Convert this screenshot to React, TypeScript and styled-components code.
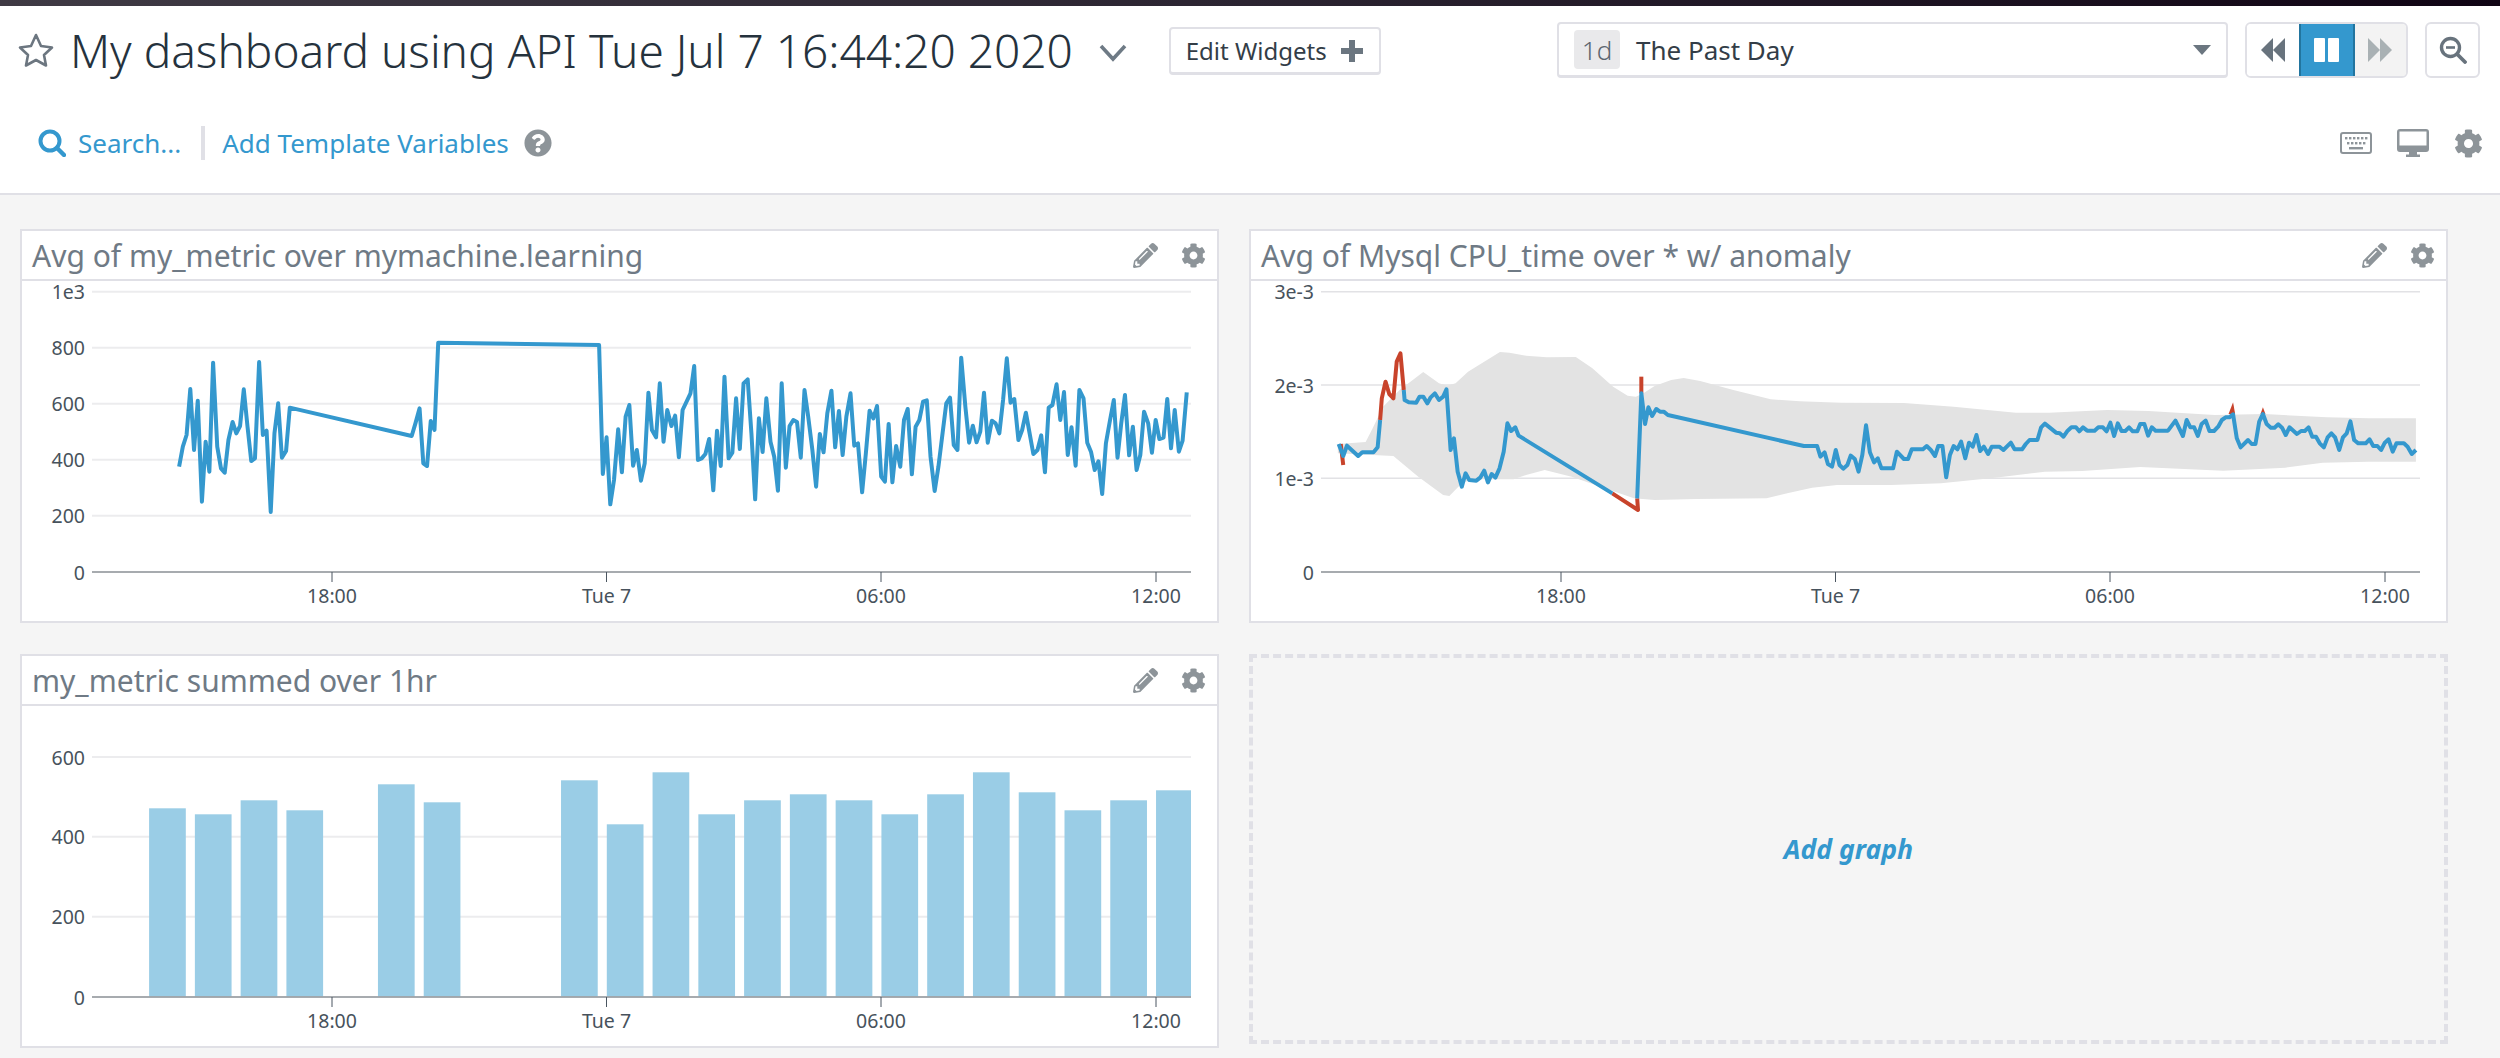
import React from "react";
import styled, { createGlobalStyle } from "styled-components";
import { FaCog, FaPencilAlt, FaQuestionCircle } from "react-icons/fa";

type Point = [number, number];

const BLUE = "#3498ce";
const RED = "#c8432b";

// samples traced off the graphs, x/y are scaled into the svg below
const trace = (points: number[][], dx: number): Point[] =>
  points.map(([x, y]) => [x / 2.412 + dx, y / 3 - 61]);
const toPath = (points: Point[]) => points.map((p) => p.join(",")).join(" ");

const metricSeries = [
  ...trace(
    [
      [432, 740], [441, 680], [450, 645], [459, 507], [468, 690], [477, 542], [487, 845], [496, 665], [505, 755],
      [514, 428], [524, 680], [533, 745], [542, 758], [551, 660], [561, 606], [570, 640], [579, 618], [588, 508],
      [597, 620], [606, 723], [615, 715], [625, 426], [634, 645], [643, 632], [653, 876], [662, 640], [671, 550],
      [680, 713], [690, 693], [699, 563], [993, 648], [1002, 610], [1012, 565], [1021, 730], [1030, 738], [1039, 603],
      [1048, 630], [1057, 368], [1445, 375], [1454, 762], [1463, 652], [1472, 853], [1481, 780], [1491, 628],
      [1500, 757], [1509, 590], [1518, 555], [1527, 737], [1536, 690], [1546, 782], [1555, 730], [1564, 518],
    ],
    -22
  ),
  ...trace(
    [
      [77, 630], [87, 652], [96, 490], [105, 665], [114, 570], [124, 618], [133, 587], [142, 712], [151, 570],
      [170, 520], [179, 438], [188, 720], [197, 715], [206, 702], [215, 657], [225, 811], [234, 632], [243, 738],
      [252, 470], [262, 715], [271, 698], [280, 535], [289, 687], [298, 490], [308, 478], [317, 640], [326, 838],
      [335, 595], [344, 696], [353, 535], [363, 665], [372, 710], [381, 812], [390, 490], [400, 743], [409, 618],
      [418, 600], [427, 606], [436, 713], [445, 510], [454, 590], [464, 690], [473, 800], [482, 642], [491, 697],
      [500, 580], [510, 512], [519, 682], [528, 573], [537, 705], [546, 590], [556, 520], [565, 677], [574, 670],
      [584, 817], [593, 700], [602, 572], [611, 595], [620, 558], [630, 770], [639, 785], [648, 612], [657, 787],
      [666, 678], [676, 740], [685, 600], [694, 567], [704, 763], [713, 620], [722, 600], [731, 545], [740, 541],
      [749, 710], [759, 813], [768, 740], [777, 650], [787, 550], [796, 533], [805, 675], [814, 690], [823, 413],
      [833, 560], [842, 668], [851, 617], [860, 667], [869, 635], [878, 518], [887, 668], [897, 602], [906, 610],
      [915, 640], [924, 540], [933, 415], [942, 548], [951, 537], [961, 660], [970, 630], [979, 578], [988, 640],
      [997, 702], [1007, 690], [1016, 646], [1025, 757], [1034, 563], [1043, 555], [1053, 493], [1062, 600],
      [1071, 516], [1080, 705], [1089, 622], [1099, 737], [1108, 510], [1118, 535], [1127, 668], [1136, 695],
      [1145, 750], [1154, 724], [1163, 822], [1172, 670], [1182, 600], [1191, 540], [1200, 713], [1209, 610],
      [1218, 525], [1228, 706], [1237, 620], [1246, 750], [1255, 705], [1264, 575], [1274, 610], [1283, 698],
      [1292, 600], [1301, 657], [1311, 653], [1320, 537], [1329, 685], [1338, 570], [1348, 695], [1357, 662],
      [1367, 517],
    ],
    598
  ),
];

const band = [
  ...trace(
    [
      [236, 672], [303, 666], [320, 625], [345, 560], [385, 510], [442, 456], [480, 490], [500, 497], [520, 490],
      [550, 455], [627, 396], [650, 398], [690, 407], [740, 412], [810, 411], [850, 445], [900, 500], [935, 527],
      [955, 530], [975, 518], [1000, 498], [1040, 480], [1070, 474], [1110, 483], [1190, 510], [1280, 538],
      [1350, 544], [1450, 548],
    ],
    -11
  ),
  ...trace(
    [
      [130, 549], [250, 560], [400, 578], [480, 578], [620, 570], [720, 573], [880, 585], [1000, 582], [1150, 592],
      [1250, 595], [1365, 595], [1365, 725], [1250, 725], [1140, 728], [1050, 743], [900, 752], [700, 741],
      [560, 753], [470, 755], [350, 773], [220, 790], [100, 795],
    ],
    599
  ),
  ...trace(
    [
      [1440, 795], [1380, 803], [1320, 820], [1270, 835], [1100, 837], [1000, 840], [950, 835], [880, 805],
      [800, 770], [735, 750], [690, 765], [660, 778], [560, 778], [535, 790], [505, 828], [490, 825], [430, 770],
      [370, 708], [320, 705], [236, 700],
    ],
    -11
  ),
];

const anomalyRed = [
  [[243, 672], [249, 735]],
  [[338, 600], [342, 535], [351, 485], [360, 522], [370, 535], [378, 425], [387, 400], [395, 510]],
  [[898, 820], [960, 870], [958, 835]],
  [[968, 520], [968, 470]],
].map((line) => trace(line, -11));

const cpuSeries = trace(
  [[238, 672], [249, 708], [258, 677], [285, 708], [295, 697], [322, 697], [332, 682], [338, 600]],
  -11
);
const cpuSeries2 = trace(
  [
    [395, 510], [397, 540], [407, 547], [425, 548], [433, 530], [442, 530], [452, 550], [460, 532], [470, 520],
    [480, 540], [490, 530], [498, 508], [508, 690], [516, 655], [525, 755], [535, 800], [544, 760], [553, 780],
    [570, 782], [580, 772], [589, 752], [598, 787], [607, 762], [616, 773], [626, 745], [636, 695], [645, 610],
    [654, 633], [664, 622], [672, 647], [898, 820],
  ],
  -11
);
const cpuSeries3 = [
  ...trace(
    [
      [958, 835], [968, 520], [977, 612], [985, 562], [994, 588], [1004, 567], [1013, 575], [1022, 575], [1032, 585],
      [1360, 678], [1392, 678], [1400, 710], [1410, 697], [1418, 732], [1428, 740], [1437, 690], [1446, 735],
      [1455, 746], [1465, 735], [1473, 707], [1483, 717], [1492, 755], [1501, 705], [1510, 616],
    ],
    -11
  ),
  ...trace(
    [
      [48, 697], [58, 727], [67, 715], [76, 745], [104, 745], [113, 695], [130, 717], [140, 717], [149, 688],
      [176, 688], [185, 678], [195, 690], [205, 708], [213, 678], [223, 678], [232, 772], [241, 705], [250, 678],
      [259, 688], [268, 665], [278, 715], [287, 668], [296, 680], [305, 645], [314, 693], [323, 680], [333, 702],
      [342, 680], [360, 680], [370, 690], [388, 668], [397, 688], [415, 688], [424, 672], [433, 660], [452, 660],
      [461, 622], [470, 611], [497, 638], [506, 640], [515, 650], [525, 632], [534, 622], [545, 622], [553, 634],
      [562, 622], [572, 632], [590, 632], [599, 622], [610, 622], [619, 634], [628, 608], [637, 648], [646, 610],
      [655, 633], [664, 633], [673, 622], [682, 634], [693, 634], [700, 612], [710, 612], [719, 647], [728, 622],
      [737, 632], [767, 632], [785, 602], [803, 648], [812, 600], [821, 622], [830, 622], [839, 648], [848, 612],
      [858, 602], [867, 633], [878, 633], [888, 620], [897, 600], [906, 592], [915, 592], [924, 583], [933, 655],
      [942, 682], [960, 660], [969, 672], [978, 672], [987, 605], [996, 582], [1005, 612], [1015, 623], [1024, 623],
      [1033, 613], [1042, 623], [1051, 645], [1060, 622], [1078, 642], [1088, 633], [1097, 633], [1106, 622],
      [1115, 650], [1124, 650], [1133, 670], [1143, 682], [1152, 652], [1161, 640], [1170, 652], [1180, 690],
      [1189, 652], [1198, 640], [1207, 604], [1216, 660], [1226, 670], [1244, 670], [1253, 658], [1262, 678],
      [1272, 678], [1281, 690], [1290, 668], [1299, 658], [1309, 695], [1318, 670], [1336, 670], [1345, 680],
      [1355, 702], [1365, 690],
    ],
    599
  ),
];
const spikes = [
  trace([[913, 582], [924, 547], [929, 582]], 599),
  trace([[990, 582], [996, 562], [1002, 582]], 599),
];

// slot index in the hour grid, bar height in px
const bars: [number, number][] = [
  [0, 188], [1, 182], [2, 196], [3, 186], [5, 212], [6, 194], [9, 216], [10, 172], [11, 224], [12, 182],
  [13, 196], [14, 202], [15, 196], [16, 182], [17, 202], [18, 224], [19, 204], [20, 186], [21, 196], [22, 206],
];

const xTicks: [number, string][] = [
  [310, "18:00"],
  [584.5, "Tue 7"],
  [859, "06:00"],
  [1134, "12:00"],
];

const App: React.FC = () => (
  <Page>
    <GlobalStyle />
    <TopStrip />
    <Header>
      <TitleRow>
        <TitleGroup>
          <svg width="38" height="36" viewBox="0 0 38 36">
            <polygon
              points="19,3 24,14 35,15.5 27,23 29,33.5 19,28 9,33.5 11,23 3,15.5 14,14"
              fill="none"
              stroke="#6c7680"
              strokeWidth="2.6"
              strokeLinejoin="round"
            />
          </svg>
          <Title>My dashboard using API Tue Jul 7 16:44:20 2020</Title>
          <Chevron width="28" height="18" viewBox="0 0 28 18">
            <polyline points="2,2 14,15 26,2" fill="none" stroke="#6e7a85" strokeWidth="3.6" />
          </Chevron>
          <EditButton>
            Edit Widgets
            <svg width="22" height="22" viewBox="0 0 22 22">
              <path d="M8 0h6v8h8v6h-8v8H8v-8H0V8h8z" fill="#6b7680" />
            </svg>
          </EditButton>
        </TitleGroup>
        <TimeControls>
          <TimeSelect>
            <SpanBadge>1d</SpanBadge>
            <SpanLabel>The Past Day</SpanLabel>
            <svg width="18" height="10" viewBox="0 0 18 10">
              <polygon points="0,0 18,0 9,10" fill="#6b7680" />
            </svg>
          </TimeSelect>
          <PlayGroup>
            <PlayButton>
              <svg width="24" height="24" viewBox="0 0 24 24">
                <polygon points="12,0 12,24 0,12" fill="#68737d" />
                <polygon points="24,0 24,24 12,12" fill="#68737d" />
              </svg>
            </PlayButton>
            <PlayButton $active>
              <svg width="25" height="24" viewBox="0 0 25 24">
                <rect width="11" height="24" rx="1" fill="#fff" />
                <rect x="14" width="11" height="24" rx="1" fill="#fff" />
              </svg>
            </PlayButton>
            <PlayButton $muted>
              <svg width="24" height="24" viewBox="0 0 24 24">
                <polygon points="0,0 12,12 0,24" fill="#a9b1b4" />
                <polygon points="12,0 24,12 12,24" fill="#a9b1b4" />
              </svg>
            </PlayButton>
          </PlayGroup>
          <ZoomButton>
            <svg width="28" height="28" viewBox="0 0 28 28">
              <circle cx="11.5" cy="11.5" r="9" fill="none" stroke="#68737d" strokeWidth="3.4" />
              <line x1="7" y1="11.5" x2="16" y2="11.5" stroke="#68737d" strokeWidth="2.6" />
              <line x1="18" y1="18" x2="26" y2="26" stroke="#68737d" strokeWidth="3.8" strokeLinecap="round" />
            </svg>
          </ZoomButton>
        </TimeControls>
      </TitleRow>
      <FilterRow>
        <FilterGroup>
          <svg width="28" height="28" viewBox="0 0 28 28">
            <circle cx="12" cy="12" r="9.5" fill="none" stroke={BLUE} strokeWidth="4" />
            <line x1="19" y1="19" x2="26" y2="26" stroke={BLUE} strokeWidth="4.4" strokeLinecap="round" />
          </svg>
          <FilterLink>Search...</FilterLink>
          <FilterDivider />
          <FilterLink>Add Template Variables</FilterLink>
          <HelpIcon size={28} color="#8d9499" />
        </FilterGroup>
        <ViewIcons>
          <svg width="32" height="22" viewBox="0 0 32 22">
            <rect x="1" y="1" width="30" height="20" rx="2" fill="none" stroke="#8d9499" strokeWidth="2" />
            {[5, 9, 13, 17, 21, 25].map((x) => (
              <rect key={x} x={x} y="5" width="2.4" height="2.4" fill="#8d9499" />
            ))}
            {[7, 11, 15, 19, 23].map((x) => (
              <rect key={x} x={x} y="10" width="2.4" height="2.4" fill="#8d9499" />
            ))}
            <rect x="9" y="15" width="14" height="2.4" fill="#8d9499" />
          </svg>
          <svg width="32" height="28" viewBox="0 0 32 28">
            <path d="M3 0h26a3 3 0 0 1 3 3v17a3 3 0 0 1-3 3H20v2.5h3V28H9v-2.5h3V23H3a3 3 0 0 1-3-3V3a3 3 0 0 1 3-3z" fill="#8d9499" />
            <rect x="2.5" y="2.5" width="27" height="14" fill="#fff" />
          </svg>
          <FaCog size={29} color="#8d9499" />
        </ViewIcons>
      </FilterRow>
    </Header>
    <Board>
      <Widget title="Avg of my_metric over mymachine.learning">
        <Plot>
          {[[10.7, "1e3"], [66.7, "800"], [122.7, "600"], [178.7, "400"], [234.7, "200"]].map(([y, label]) => (
            <React.Fragment key={label}>
              <GridLine x1="70" x2="1169" y1={y} y2={y} />
              <AxisLabel x="63" y={y} textAnchor="end">{label}</AxisLabel>
            </React.Fragment>
          ))}
          <Axes />
          <SeriesLine points={toPath(metricSeries)} stroke={BLUE} />
        </Plot>
      </Widget>
      <Widget title="Avg of Mysql CPU_time over * w/ anomaly">
        <Plot>
          {[[10.7, "3e-3"], [104, "2e-3"], [197.3, "1e-3"]].map(([y, label]) => (
            <React.Fragment key={label}>
              <GridLine $thin x1="70" x2="1169" y1={y} y2={y} />
              <AxisLabel x="63" y={y} textAnchor="end">{label}</AxisLabel>
            </React.Fragment>
          ))}
          <polygon points={toPath(band)} fill="#e3e3e3" />
          <Axes />
          {anomalyRed.map((line, i) => (
            <SeriesLine key={i} points={toPath(line)} stroke={RED} />
          ))}
          {spikes.map((s, i) => (
            <polygon key={i} points={toPath(s)} fill={RED} />
          ))}
          {[cpuSeries, cpuSeries2, cpuSeries3].map((line, i) => (
            <SeriesLine key={i} points={toPath(line)} stroke={BLUE} />
          ))}
        </Plot>
      </Widget>
      <Widget title="my_metric summed over 1hr">
        <Plot>
          {[[51, "600"], [130.7, "400"], [210.7, "200"]].map(([y, label]) => (
            <React.Fragment key={label}>
              <GridLine x1="70" x2="1169" y1={y} y2={y} />
              <AxisLabel x="63" y={y} textAnchor="end">{label}</AxisLabel>
            </React.Fragment>
          ))}
          {bars.map(([slot, h]) => {
            const x = 127.1 + slot * 45.77;
            return <rect key={slot} x={x} y={290.3 - h} width={Math.min(36.7, 1169 - x)} height={h} fill="#9acde6" />;
          })}
          <Axes />
        </Plot>
      </Widget>
      <AddGraph>Add graph</AddGraph>
    </Board>
  </Page>
);

const Axes: React.FC = () => (
  <>
    <BaseLine x1="70" x2="1169" y1="291" y2="291" />
    <AxisLabel x="63" y="291" textAnchor="end">0</AxisLabel>
    {xTicks.map(([x, label]) => (
      <React.Fragment key={label}>
        <TickMark x1={x} x2={x} y1="291" y2="301" />
        <AxisLabel x={x} y="314" textAnchor="middle">{label}</AxisLabel>
      </React.Fragment>
    ))}
  </>
);

const Widget: React.FC<{ title: string; children: React.ReactNode }> = ({ title, children }) => (
  <Card>
    <CardHeader>
      <CardTitle>{title}</CardTitle>
      <CardActions>
        <FaPencilAlt size={25} color="#8d9499" />
        <FaCog size={25} color="#8d9499" />
      </CardActions>
    </CardHeader>
    {children}
  </Card>
);

const Plot: React.FC<{ children: React.ReactNode }> = ({ children }) => (
  <PlotArea viewBox="0 0 1195 340">{children}</PlotArea>
);

const GlobalStyle = createGlobalStyle`
  html, body {
    margin: 0;
    padding: 0;
    background: #f5f5f5;
  }
  * {
    box-sizing: border-box;
  }
`;

const Page = styled.div`
  width: 2500px;
  height: 1058px;
  overflow: hidden;
  font-family: "Noto Sans", "Open Sans", sans-serif;
  background: #f5f5f5;
`;

const TopStrip = styled.div`
  height: 6px;
  background: linear-gradient(90deg, #3f3a44 0%, #2b2431 50%, #100414 100%);
`;

const Header = styled.header`
  height: 189px;
  padding: 16px 20px 0 17px;
  background: #fff;
  border-bottom: 2px solid #e0e0e6;
`;

const TitleRow = styled.div`
  display: flex;
  justify-content: space-between;
  align-items: center;
  height: 56px;
`;

const TitleGroup = styled.div`
  display: flex;
  align-items: center;
  gap: 15px;
`;

const Title = styled.h1`
  margin: 0;
  font-size: 46px;
  font-weight: 300;
  line-height: 56px;
  color: #25323d;
  white-space: nowrap;
`;

const Chevron = styled.svg`
  margin: 6px 0 0 11px;
`;

const EditButton = styled.button`
  display: flex;
  align-items: center;
  gap: 14px;
  height: 48px;
  margin: 2px 0 0 27px;
  padding: 0 16px 0 15px;
  font: 400 24px "Noto Sans", sans-serif;
  color: #333d47;
  background: #fff;
  border: 2px solid #e0e0e6;
  border-bottom-width: 3px;
  border-radius: 4px;
`;

const TimeControls = styled.div`
  display: flex;
  align-items: center;
  gap: 17px;
`;

const TimeSelect = styled.div`
  display: flex;
  align-items: center;
  width: 671px;
  height: 56px;
  padding: 0 15px 0 15px;
  background: #fff;
  border: 2px solid #e0e0e6;
  border-bottom-width: 3px;
  border-radius: 4px;

  svg {
    margin-left: auto;
  }
`;

const SpanBadge = styled.span`
  display: flex;
  align-items: center;
  justify-content: center;
  width: 46px;
  height: 39px;
  font-size: 26px;
  font-weight: 300;
  color: #5c6670;
  background: #e9e9eb;
  border-radius: 4px;
`;

const SpanLabel = styled.span`
  margin-left: 16px;
  font-size: 26px;
  color: #333d47;
`;

const PlayGroup = styled.div`
  display: flex;
  width: 163px;
  height: 56px;
  overflow: hidden;
  border: 2px solid #e0e0e6;
  border-radius: 6px;
`;

const PlayButton = styled.div<{ $active?: boolean; $muted?: boolean }>`
  display: flex;
  align-items: center;
  justify-content: center;
  flex: ${(p) => (p.$active ? "0 0 56px" : "1")};
  margin: ${(p) => (p.$active ? "-2px 0" : "0")};
  background: ${(p) => (p.$active ? BLUE : p.$muted ? "#f3f3f3" : "#fff")};
  border: ${(p) => (p.$active ? "2px solid #22759f" : "none")};
`;

const ZoomButton = styled.div`
  display: flex;
  align-items: center;
  justify-content: center;
  width: 55px;
  height: 56px;
  background: #fff;
  border: 2px solid #e0e0e6;
  border-radius: 6px;
`;

const FilterRow = styled.div`
  display: flex;
  justify-content: space-between;
  align-items: center;
  height: 34px;
  margin-top: 48px;
  padding: 0 0 0 21px;
  margin-right: -3px;
`;

const FilterGroup = styled.div`
  display: flex;
  align-items: center;
  gap: 12px;
`;

const FilterLink = styled.a`
  font-size: 26px;
  color: ${BLUE};
`;

const FilterDivider = styled.span`
  width: 4px;
  height: 34px;
  margin: 0 5px 0 8px;
  background: #e0e0e6;
`;

const HelpIcon = styled(FaQuestionCircle)`
  margin-left: 3px;
`;

const ViewIcons = styled.div`
  display: flex;
  align-items: center;
  gap: 25px;
`;

const Board = styled.main`
  display: grid;
  grid-template-columns: 1199px 1199px;
  grid-template-rows: 394px 394px;
  gap: 31px 30px;
  padding: 34px 0 0 20px;
`;

const Card = styled.section`
  display: flex;
  flex-direction: column;
  background: #fff;
  border: 2px solid #e0e0e6;
`;

const CardHeader = styled.div`
  display: flex;
  justify-content: space-between;
  align-items: center;
  flex: 0 0 50px;
  padding: 0 11px 0 10px;
  border-bottom: 2px solid #e0e0e6;
`;

const CardTitle = styled.h2`
  margin: 0;
  font-size: 30px;
  font-weight: 400;
  color: #6f7a85;
  white-space: nowrap;
`;

const CardActions = styled.div`
  display: flex;
  align-items: center;
  gap: 23px;
`;

const PlotArea = styled.svg`
  display: block;
  width: 1195px;
  height: 340px;
  overflow: visible;
`;

const GridLine = styled.line<{ $thin?: boolean }>`
  stroke: ${(p) => (p.$thin ? "#e2e2e5" : "#ececee")};
  stroke-width: ${(p) => (p.$thin ? 1.4 : 2)};
`;

const BaseLine = styled.line`
  stroke: #8a8f94;
  stroke-width: 1.6;
`;

const TickMark = styled.line`
  stroke: #4a5560;
  stroke-width: 1;
`;

const AxisLabel = styled.text`
  font-size: 19.5px;
  fill: #47525c;
  dominant-baseline: central;
`;

const SeriesLine = styled.polyline`
  fill: none;
  stroke-width: 4;
  stroke-linejoin: round;
`;

const AddGraph = styled.div`
  display: flex;
  align-items: center;
  justify-content: center;
  height: 390px;
  font-size: 26.6px;
  font-weight: 700;
  font-style: italic;
  color: ${BLUE};
  border: 4px dashed #e0e0e6;
`;

export default App;
